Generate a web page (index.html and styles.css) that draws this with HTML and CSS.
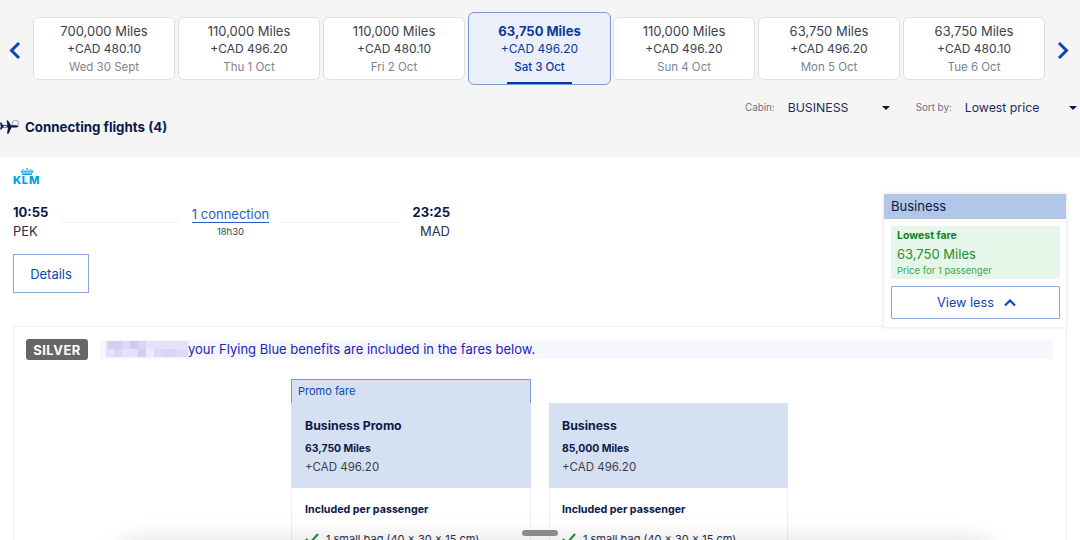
FILE: index.html
```html
<!DOCTYPE html>
<html lang="en">
<head>
    <meta charset="UTF-8">
    <title>Flights</title>
    <link rel="stylesheet" href="styles.css">
</head>
<body>
    <div class="top">
        <div class="dates">
            <svg class="arrow" width="14" height="19" viewBox="0 0 14 19"><path d="M12 2 L4.5 9.5 L12 17" fill="none" stroke="#0b46b4" stroke-width="3"/></svg>
            <div class="date">
                <b>700,000 Miles</b><span>+CAD 480.10</span><i>Wed 30 Sept</i>
            </div>
            <div class="date">
                <b>110,000 Miles</b><span>+CAD 496.20</span><i>Thu 1 Oct</i>
            </div>
            <div class="date">
                <b>110,000 Miles</b><span>+CAD 480.10</span><i>Fri 2 Oct</i>
            </div>
            <div class="date active">
                <b>63,750 Miles</b><span>+CAD 496.20</span><i>Sat 3 Oct</i>
            </div>
            <div class="date">
                <b>110,000 Miles</b><span>+CAD 496.20</span><i>Sun 4 Oct</i>
            </div>
            <div class="date">
                <b>63,750 Miles</b><span>+CAD 496.20</span><i>Mon 5 Oct</i>
            </div>
            <div class="date">
                <b>63,750 Miles</b><span>+CAD 480.10</span><i>Tue 6 Oct</i>
            </div>
            <svg class="arrow" width="14" height="19" viewBox="0 0 14 19"><path d="M3 2 L10.5 9.5 L3 17" fill="none" stroke="#0b46b4" stroke-width="3"/></svg>
        </div>
        <div class="filters">
            <label>Cabin:</label>
            <span class="select cabin">BUSINESS</span>
            <label>Sort by:</label>
            <span class="select sort">Lowest price</span>
        </div>
        <h2 class="heading">
            <svg width="20" height="16" viewBox="0 0 20 16">
                <circle cx="15.5" cy="4.5" r="3.2" fill="#f5f5f5" stroke="#8a90a6" stroke-width=".8"/>
                <path d="M0 3.5 H1.3 L3 6.2 H7.5 L6.6 1.5 H8 L11 6.2 H16.5 L18.8 7.4 L16.5 8.6 H11.5 L8.6 14.8 H7 L8 8.6 H3 L1.3 10.5 H0 L.8 7.4 Z" fill="#0b1a48"/>
                <rect x="3.6" y="7" width="3" height="1" fill="#f5f5f5"/>
            </svg>
            Connecting flights (4)
        </h2>
    </div>

    <div class="main">
        <div class="flight">
            <div class="klm">
                <svg width="14" height="7" viewBox="0 0 14 7">
                    <g fill="#00a1de">
                        <circle cx="7" cy=".9" r=".9"/>
                        <circle cx="3.2" cy="1.6" r=".7"/>
                        <circle cx="10.8" cy="1.6" r=".7"/>
                        <rect x="1" y="2.6" width="12" height="2"/>
                        <rect x="2" y="5.4" width="10" height="1.6"/>
                    </g>
                    <g fill="#fff">
                        <rect x="3.5" y="2.6" width=".8" height="2"/>
                        <rect x="6.6" y="2.6" width=".8" height="2"/>
                        <rect x="9.7" y="2.6" width=".8" height="2"/>
                    </g>
                </svg>
                <span>KLM</span>
            </div>
            <div class="route">
                <div class="stop">
                    <b>10:55</b>
                    <span>PEK</span>
                </div>
                <div class="line"></div>
                <div class="via">
                    <a>1 connection</a>
                    <small>18h30</small>
                </div>
                <div class="line"></div>
                <div class="stop end">
                    <b>23:25</b>
                    <span>MAD</span>
                </div>
            </div>
            <div class="details">Details</div>
        </div>

        <div class="panel">
            <div class="benefits">
                <span class="silver">SILVER</span>
                <div class="strip">
                    <svg class="blur" width="88" height="18" viewBox="0 0 88 18">
                        <rect x="6" y="1" width="82" height="16" fill="#e4e2f8"/>
                        <rect x="8" y="1" width="14" height="8" fill="#d3cff2"/>
                        <rect x="22" y="1" width="8" height="8" fill="#dcd9f5"/>
                        <rect x="30" y="1" width="8" height="8" fill="#cfcbf0"/>
                        <rect x="38" y="1" width="8" height="8" fill="#d8d5f4"/>
                        <rect x="14" y="9" width="8" height="8" fill="#dad7f4"/>
                        <rect x="38" y="9" width="8" height="8" fill="#d3cff2"/>
                        <rect x="46" y="9" width="8" height="8" fill="#eceafb"/>
                        <rect x="54" y="9" width="8" height="8" fill="#dcd9f5"/>
                        <rect x="62" y="9" width="14" height="8" fill="#d8d5f4"/>
                        <rect x="76" y="9" width="12" height="8" fill="#dedbf6"/>
                    </svg>
                    your Flying Blue benefits are included in the fares below.
                </div>
            </div>
            <div class="fares">
                <div class="fare">
                    <div class="promo">Promo fare</div>
                    <div class="fare-head">
                        <h3>Business Promo</h3>
                        <b>63,750 Miles</b>
                        <span>+CAD 496.20</span>
                    </div>
                    <div class="fare-body">
                        <h4>Included per passenger</h4>
                        <div class="perk">
                            <svg width="14" height="12" viewBox="0 0 14 12"><path d="M1 6 L5 10 L13 1" fill="none" stroke="#1f8f32" stroke-width="2"/></svg>
                            1 small bag (40 x 30 x 15 cm)
                        </div>
                    </div>
                </div>
                <div class="fare">
                    <div class="fare-head">
                        <h3>Business</h3>
                        <b>85,000 Miles</b>
                        <span>+CAD 496.20</span>
                    </div>
                    <div class="fare-body">
                        <h4>Included per passenger</h4>
                        <div class="perk">
                            <svg width="14" height="12" viewBox="0 0 14 12"><path d="M1 6 L5 10 L13 1" fill="none" stroke="#1f8f32" stroke-width="2"/></svg>
                            1 small bag (40 x 30 x 15 cm)
                        </div>
                    </div>
                </div>
            </div>
        </div>
    </div>

    <div class="price-box">
        <div class="price-title">Business</div>
        <div class="price-inner">
            <div class="lowest">
                <b>Lowest fare</b>
                <span>63,750 Miles</span>
                <small>Price for 1 passenger</small>
            </div>
            <div class="less">
                View less
                <svg width="14" height="9" viewBox="0 0 14 9"><path d="M2 7.5 L7 2.5 L12 7.5" fill="none" stroke="#0b46b4" stroke-width="2.2"/></svg>
            </div>
        </div>
    </div>

    <div class="sheet"></div>
    <div class="handle"></div>
</body>
</html>
```

FILE: styles.css
```css
* {
    margin: 0;
    padding: 0;
    box-sizing: border-box;
}
html, body {
    height: 540px;
    overflow: hidden;
}
body {
    position: relative;
    background: #fff;
    color: #0b1a48;
    font-family: Inter, "Liberation Sans", sans-serif;
}

.top {
    height: 157px;
    background: #f5f5f5;
    padding-top: 12px;
}
.dates {
    display: flex;
    align-items: flex-start;
    gap: 3px;
    height: 73px;
    padding-left: 7px;
}
.arrow {
    flex: none;
    margin-top: 29px;
}
.arrow:first-child {
    margin-right: 9px;
}
.arrow:last-child {
    margin-left: 8px;
}
.date {
    display: flex;
    flex-direction: column;
    align-items: center;
    width: 142px;
    height: 63px;
    margin-top: 5px;
    padding-top: 4px;
    background: #fff;
    border: 1px solid #dfdfdf;
    border-radius: 6px;
    color: #3b3f4e;
}
.date b {
    font-size: 13px;
    font-weight: 400;
    line-height: 18px;
}
.date span {
    font-size: 12px;
    line-height: 17px;
}
.date i {
    margin-top: 1px;
    font-size: 11.5px;
    font-style: normal;
    line-height: 18px;
    color: #80838c;
}
.date.active {
    position: relative;
    width: 143px;
    height: 73px;
    margin-top: 0;
    margin-right: -1px;
    padding-top: 9px;
    background: #eaeff9;
    border-color: #7c9ad2;
    color: #0b3a9c;
}
.date.active b {
    font-weight: 700;
}
.date.active i {
    color: #0b3a9c;
    font-weight: 500;
}
.date.active::after {
    content: "";
    position: absolute;
    left: 38px;
    bottom: 0;
    width: 65px;
    height: 2px;
    background: #0b3a9c;
}

.filters {
    display: flex;
    align-items: center;
    height: 20px;
    margin-top: 12px;
    padding-left: 745px;
}
.filters label {
    font-size: 9.8px;
    color: #6c7080;
    white-space: nowrap;
}
.select {
    position: relative;
    font-size: 12.3px;
    color: #1d2a5c;
}
.select::after {
    content: "";
    position: absolute;
    top: 6px;
    border-left: 4px solid transparent;
    border-right: 4px solid transparent;
    border-top: 4px solid #0b1a48;
}
.cabin {
    flex: none;
    width: 128px;
    margin-left: 13px;
}
.cabin::after {
    left: 94px;
}
.sort {
    flex: none;
    width: 115px;
    margin-left: 13px;
}
.sort::after {
    left: 104px;
}
.heading {
    display: flex;
    align-items: center;
    gap: 5px;
    margin-top: 1px;
    font-size: 13.3px;
    font-weight: 700;
    line-height: 18px;
}

.flight {
    height: 169px;
    padding: 11px 13px 0;
}
.klm {
    display: flex;
    flex-direction: column;
    align-items: center;
    width: 27px;
    height: 20px;
}
.klm span {
    margin-top: 1px;
    font-size: 11px;
    font-weight: 800;
    line-height: 9px;
    color: #00a1de;
    letter-spacing: .8px;
}
.route {
    display: flex;
    width: 437px;
    margin-top: 15px;
    font-size: 13px;
}
.stop {
    display: flex;
    flex-direction: column;
    gap: 1px;
    width: 48px;
    line-height: 18px;
    color: #2b3050;
}
.stop b {
    font-size: 13px;
    font-weight: 700;
    color: #0b1a48;
}
.stop.end {
    width: 50px;
    text-align: right;
}
.line {
    flex: 1;
    height: 1px;
    margin-top: 19px;
    background: #f0f0f4;
}
.via {
    display: flex;
    flex-direction: column;
    align-items: center;
    width: 103px;
    padding-top: 4px;
}
.via a {
    font-size: 13px;
    line-height: 15px;
    color: #2a5cc8;
    border-bottom: 1px solid #2a5cc8;
}
.via small {
    margin-top: 3px;
    font-size: 9.5px;
    line-height: 12px;
    color: #3b3f4e;
}
.details {
    display: flex;
    align-items: center;
    justify-content: center;
    width: 76px;
    height: 39px;
    margin-top: 14px;
    border: 1px solid #8aa5dc;
    font-size: 13px;
    color: #0b46b4;
}

.panel {
    height: 300px;
    margin: 0 13px;
    border: 1px solid #eeeeee;
    padding: 12px 12px 0;
}
.benefits {
    display: flex;
    align-items: center;
    gap: 12px;
}
.silver {
    display: flex;
    align-items: center;
    justify-content: center;
    width: 62px;
    height: 21px;
    background: #666;
    border-radius: 3px;
    color: #fff;
    font-size: 13px;
    font-weight: 700;
    letter-spacing: .5px;
}
.strip {
    display: flex;
    align-items: center;
    width: 953px;
    height: 19px;
    padding-bottom: 1px;
    background: #f6f6fd;
    font-size: 13px;
    color: #2323b8;
}
.blur {
    flex: none;
}
.fares {
    display: flex;
    align-items: flex-start;
    gap: 18px;
    margin-top: 19px;
    padding-left: 265px;
}
.fare {
    width: 239px;
    padding-top: 24px;
}
.fare:first-child {
    width: 240px;
    padding-top: 0;
}
.promo {
    height: 24px;
    padding: 4px 6px 0;
    background: #d5e0f2;
    border: 1px solid #7c9ad2;
    border-bottom: 0;
    font-size: 11px;
    color: #0b46b4;
}
.fare-head {
    height: 85px;
    padding: 15px 13px 0;
    background: #d5e0f2;
}
.fare:first-child .fare-head {
    padding-left: 14px;
}
.fare-head h3 {
    font-size: 12.3px;
    font-weight: 700;
    line-height: 16px;
}
.fare-head b {
    display: block;
    margin-top: 7px;
    font-size: 10.4px;
    font-weight: 700;
    line-height: 16px;
}
.fare-head span {
    display: block;
    margin-top: 2px;
    font-size: 11.5px;
    line-height: 16px;
    color: #3b3f4e;
}
.fare-body {
    height: 60px;
    padding: 15px 12px 0;
    border: 1px solid #eeeeee;
    border-top: 0;
}
.fare:first-child .fare-body {
    padding-left: 13px;
}
.fare-body h4 {
    font-size: 10.7px;
    font-weight: 700;
    line-height: 14px;
}
.perk {
    display: flex;
    align-items: center;
    gap: 7px;
    margin-top: 15px;
    font-size: 11px;
    line-height: 14px;
    color: #2b3050;
}

/* floats over the flight row and the panel */
.price-box {
    position: absolute;
    left: 884px;
    top: 194px;
    width: 182px;
    height: 133px;
    background: #fff;
    box-shadow: 0 0 4px rgba(0, 0, 0, .15);
}
.price-title {
    height: 25px;
    padding-left: 7px;
    background: #b2c7e8;
    font-size: 13px;
    line-height: 25px;
}
.price-inner {
    padding: 7px 6px 0 7px;
}
.lowest {
    display: flex;
    flex-direction: column;
    height: 53px;
    padding: 3px 6px 0;
    background: #e6f6e8;
    color: #1f8f32;
}
.lowest b {
    font-size: 10.5px;
    font-weight: 700;
    line-height: 14px;
    color: #0f8226;
}
.lowest span {
    padding-top: 1px;
    font-size: 13px;
    line-height: 21px;
}
.lowest small {
    margin-top: -1px;
    font-size: 9.5px;
    line-height: 13px;
    color: #3ea552;
}
.less {
    display: flex;
    align-items: center;
    justify-content: center;
    gap: 9px;
    height: 33px;
    margin-top: 7px;
    padding: 0 0 1px 3px;
    border: 1px solid #8aa5dc;
    border-radius: 1px;
    font-size: 12.7px;
    color: #0b46b4;
}

/* bottom sheet peeking in, only its shadow shows */
.sheet {
    position: absolute;
    left: 120px;
    right: 90px;
    top: 548px;
    height: 40px;
    border-radius: 20px;
    box-shadow: 0 0 26px 6px rgba(0, 0, 0, .16);
}
.handle {
    position: absolute;
    left: 522px;
    top: 530px;
    width: 36px;
    height: 6px;
    border-radius: 3px;
    background: #8b8b8b;
}
```
